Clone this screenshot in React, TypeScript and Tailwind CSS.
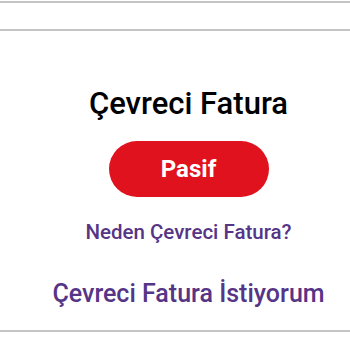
export default function App() {
    return (
        <div className="w-[350px] h-[350px] bg-white flex flex-col overflow-hidden" style={{ fontFamily: 'Roboto, "Noto Sans", sans-serif' }}>
            <div className="mt-[1px] h-[2px] bg-[#c4c4c4]" />
            <div className="h-[26px] bg-white" />
            <div className="h-[2px] bg-[#c4c4c4]" />

            <div className="flex-1 flex flex-col items-center pl-[27px]">
                <h1 className="mt-[55px] text-[31px] leading-[36px] font-medium text-black whitespace-nowrap">Çevreci Fatura</h1>
                <button className="mt-[19px] w-[160px] h-[56px] rounded-full bg-[#e0121d] text-white text-[24px] font-bold">Pasif</button>
                <p className="mt-[23px] text-[20.5px] leading-[24px] font-medium text-[#563587] whitespace-nowrap">Neden Çevreci Fatura?</p>
                <p className="mt-[35px] text-[25px] leading-[30px] font-medium text-[#563587] whitespace-nowrap">Çevreci Fatura İstiyorum</p>
            </div>

            <div className="mb-[18px] h-[2px] bg-[#c4c4c4]" />
        </div>
    )
}
